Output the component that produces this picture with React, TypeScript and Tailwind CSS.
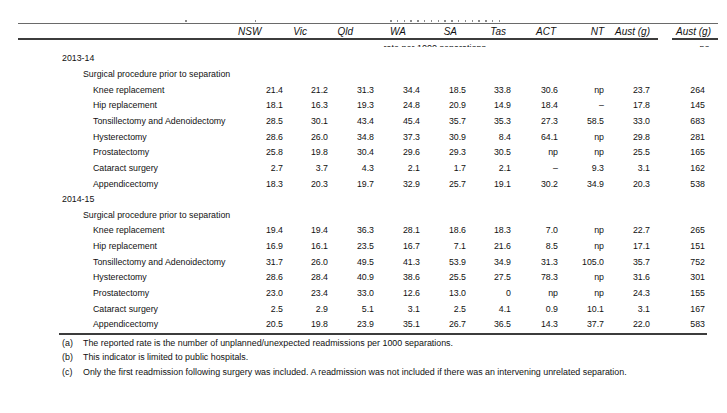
const COLS = "grid grid-cols-[220px_45px_45px_46px_46px_46px_45px_47px_46px_46px_68px]";

const HEADERS: { label: string; cls: string }[] = [
  { label: "NSW", cls: "pr-[25px]" },
  { label: "Vic", cls: "pr-[21px]" },
  { label: "Qld", cls: "pr-[21px]" },
  { label: "WA", cls: "pr-[14px]" },
  { label: "SA", cls: "pr-[9px]" },
  { label: "Tas", cls: "pr-[5px]" },
  { label: "ACT", cls: "pr-[2px]" },
  { label: "NT", cls: "pr-0" },
  { label: "Aust (g)", cls: "pr-0" },
  { label: "Aust (g)", cls: "pr-[7px]" },
];

const SECTIONS: { year: string; rows: string[][] }[] = [
  {
    year: "2013-14",
    rows: [
      ["Knee replacement", "21.4", "21.2", "31.3", "34.4", "18.5", "33.8", "30.6", "np", "23.7", "264"],
      ["Hip replacement", "18.1", "16.3", "19.3", "24.8", "20.9", "14.9", "18.4", "–", "17.8", "145"],
      ["Tonsillectomy and Adenoidectomy", "28.5", "30.1", "43.4", "45.4", "35.7", "35.3", "27.3", "58.5", "33.0", "683"],
      ["Hysterectomy", "28.6", "26.0", "34.8", "37.3", "30.9", "8.4", "64.1", "np", "29.8", "281"],
      ["Prostatectomy", "25.8", "19.8", "30.4", "29.6", "29.3", "30.5", "np", "np", "25.5", "165"],
      ["Cataract surgery", "2.7", "3.7", "4.3", "2.1", "1.7", "2.1", "–", "9.3", "3.1", "162"],
      ["Appendicectomy", "18.3", "20.3", "19.7", "32.9", "25.7", "19.1", "30.2", "34.9", "20.3", "538"],
    ],
  },
  {
    year: "2014-15",
    rows: [
      ["Knee replacement", "19.4", "19.4", "36.3", "28.1", "18.6", "18.3", "7.0", "np", "22.7", "265"],
      ["Hip replacement", "16.9", "16.1", "23.5", "16.7", "7.1", "21.6", "8.5", "np", "17.1", "151"],
      ["Tonsillectomy and Adenoidectomy", "31.7", "26.0", "49.5", "41.3", "53.9", "34.9", "31.3", "105.0", "35.7", "752"],
      ["Hysterectomy", "28.6", "28.4", "40.9", "38.6", "25.5", "27.5", "78.3", "np", "31.6", "301"],
      ["Prostatectomy", "23.0", "23.4", "33.0", "12.6", "13.0", "0", "np", "np", "24.3", "155"],
      ["Cataract surgery", "2.5", "2.9", "5.1", "3.1", "2.5", "4.1", "0.9", "10.1", "3.1", "167"],
      ["Appendicectomy", "20.5", "19.8", "23.9", "35.1", "26.7", "36.5", "14.3", "37.7", "22.0", "583"],
    ],
  },
];

const NOTES = [
  ["(a)", "The reported rate is the number of unplanned/unexpected readmissions per 1000 separations."],
  ["(b)", "This indicator is limited to public hospitals."],
  ["(c)", "Only the first readmission following surgery was included. A readmission was not included if there was an intervening unrelated separation."],
];

function Dot() {
  return <span className="block w-[1.5px] h-[1.5px] bg-[#8a8a8a] shrink-0" />;
}

function DataRow({ cells }: { cells: string[] }) {
  const [label, ...values] = cells;
  return (
    <div className={`${COLS} h-[15.65px] items-center`}>
      <div className="pl-[75px] whitespace-nowrap">{label}</div>
      {values.map((v, i) => (
        <div key={i} className={i === values.length - 1 ? "text-right pr-[13px]" : "text-right"}>
          {v}
        </div>
      ))}
    </div>
  );
}

export default function App() {
  return (
    <div className="w-[727px] h-[413px] bg-white text-[#111] font-['Liberation_Sans',Arial,sans-serif] overflow-hidden">
      <div className="pt-[20px] pl-[18px] w-[718px]">
        {/* clipped glyph bottoms from the row above */}
        <div className="flex h-[2px] items-start">
          <span className="ml-[167px]"><Dot /></span>
          <span className="ml-[68px]"><Dot /></span>
          <div className="ml-[134px] flex gap-[5.3px]">
            {Array.from({ length: 17 }).map((_, i) => (
              <Dot key={i} />
            ))}
          </div>
        </div>

        <div className="mt-[1px] h-[1px] bg-[#6a6a6a]" />

        {/* header */}
        <div className={`${COLS} h-[14px] items-center text-[10px] italic`}>
          <div />
          {HEADERS.map((h, i) => (
            <div key={i} className={`text-right whitespace-nowrap ${h.cls}`}>
              {h.label}
            </div>
          ))}
        </div>
        <div className="flex h-[2px]">
          <div className="w-[640px] bg-[#3c3c3c]" />
          <div className="ml-[14px] w-[46px] bg-[#3c3c3c]" />
        </div>

        {/* clipped subtitle strip */}
        <div className="h-[11.2px] pt-[4px] text-[9px]">
          <div className={`${COLS} h-[3px] overflow-hidden leading-none`}>
            <div />
            <div className="col-span-5 whitespace-nowrap text-right">
              <span className="inline-block translate-x-[20px]">rate per 1000 separations</span>
            </div>
            <div className="col-span-4" />
            <div className="text-right pr-[6px]">no.</div>
          </div>
        </div>

        {/* body */}
        <div className="text-[8.8px]">
          {SECTIONS.map((s) => (
            <div key={s.year}>
              <div className="h-[15.65px] flex items-center pl-[44px]">{s.year}</div>
              <div className="h-[15.65px] flex items-center pl-[65px]">Surgical procedure prior to separation</div>
              {s.rows.map((r) => (
                <DataRow key={r[0]} cells={r} />
              ))}
            </div>
          ))}
        </div>
      </div>

      <div className="ml-[59px] w-[648px] h-[2px] bg-[#3c3c3c]" />

      {/* footnotes */}
      <div className="pt-[2px] text-[8.9px]">
        {NOTES.map(([k, t]) => (
          <div key={k} className="h-[14.3px] flex items-center pl-[62px] whitespace-nowrap">
            <span className="w-[21px] shrink-0">{k}</span>
            <span>{t}</span>
          </div>
        ))}
      </div>
    </div>
  );
}
